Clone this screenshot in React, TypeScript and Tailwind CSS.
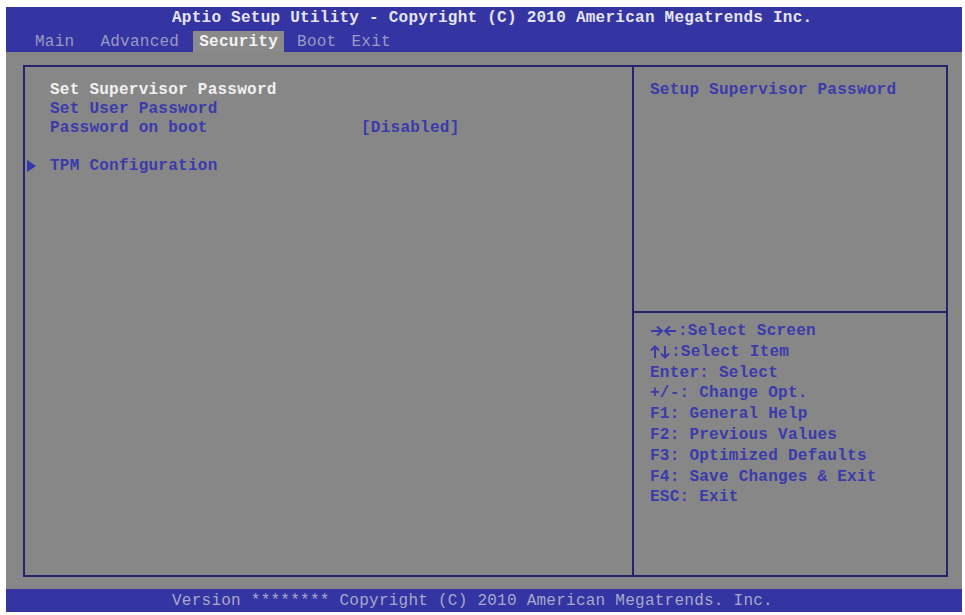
import React from "react";

const font = { fontFamily: '"Liberation Mono", "DejaVu Sans Mono", monospace' };

const tabs = [
  { label: "Main", active: false, gap: "mr-[14px]" },
  { label: "Advanced", active: false, gap: "mr-[8px]" },
  { label: "Security", active: true, gap: "mr-[7px]" },
  { label: "Boot", active: false, gap: "mr-[3px]" },
  { label: "Exit", active: false, gap: "" },
];

const helpKeys = [
  "Enter: Select",
  "+/-: Change Opt.",
  "F1: General Help",
  "F2: Previous Values",
  "F3: Optimized Defaults",
  "F4: Save Changes & Exit",
  "ESC: Exit",
];

function LeftRightArrows() {
  return (
    <svg width="27" height="12" viewBox="0 0 27 12" className="inline-block mr-[1px]">
      <g stroke="#3b3bab" strokeWidth="2" fill="none">
        <path d="M1 6h11M7 1.5l5 4.5-5 4.5" />
        <path d="M26 6h-11M20 1.5l-5 4.5 5 4.5" />
      </g>
    </svg>
  );
}

function UpDownArrows() {
  return (
    <svg width="20" height="14" viewBox="0 0 20 14" className="inline-block mr-[1px]">
      <g stroke="#3b3bab" strokeWidth="2" fill="none">
        <path d="M5 13V1.5M1 5.5l4-4 4 4" />
        <path d="M15 1v11.5M11 8.5l4 4 4-4" />
      </g>
    </svg>
  );
}

export default function App() {
  return (
    <div
      className="w-[965px] h-[615px] bg-white pt-[7px] pl-[6px] pr-[3px] pb-[3px] flex flex-col text-[16px] tracking-[0.25px] font-bold"
      style={font}
    >
      {/* Header */}
      <div className="h-[45px] bg-[#3434a2] flex flex-col">
        <div className="h-[21px] pl-[166px] flex items-center text-[#e4e4f0] whitespace-pre">
          Aptio Setup Utility - Copyright (C) 2010 American Megatrends Inc.
        </div>
        <div className="flex-1 flex items-end pl-[23px]">
          {tabs.map((t) => (
            <div
              key={t.label}
              className={`h-[21px] px-[6px] flex items-center ${t.gap} ${
                t.active ? "bg-[#8a8a8a] text-[#f2f2f2]" : "text-[#9a9ac2] font-normal"
              }`}
            >
              {t.label}
            </div>
          ))}
        </div>
      </div>

      {/* Body */}
      <div className="flex-1 bg-[#878787] pl-[17px] pt-[13px] pr-[14px] pb-[12px]">
        <div className="h-full border-2 border-[#24246a] flex">
          {/* Left pane */}
          <div className="w-[609px] border-r-2 border-[#24246a] pt-[14px] pl-[25px] leading-[19px]">
            <div className="text-[#f0f0f0]">Set Supervisor Password</div>
            <div className="text-[#3b3bab]">Set User Password</div>
            <div className="flex text-[#3b3bab]">
              <span className="w-[311px]">Password on boot</span>
              <span>[Disabled]</span>
            </div>
            <div className="h-[19px]" />
            <div className="relative text-[#3b3bab]">
              <svg width="9" height="12" viewBox="0 0 9 12" className="absolute left-[-23px] top-[3px]">
                <path d="M0 0L9 6L0 12Z" fill="#3535b0" />
              </svg>
              TPM Configuration
            </div>
          </div>

          {/* Right pane */}
          <div className="flex-1 flex flex-col">
            <div className="h-[246px] border-b-2 border-[#24246a] pl-[16px] pt-[14px] leading-[19px] text-[#3b3bab]">
              Setup Supervisor Password
            </div>
            <div className="flex-1 pl-[16px] pt-[8px] leading-[20.8px] text-[#3b3bab]">
              <div className="flex items-center h-[20.8px] whitespace-pre">
                <LeftRightArrows />
                <span>:Select Screen</span>
              </div>
              <div className="flex items-center h-[20.8px] whitespace-pre">
                <UpDownArrows />
                <span>:Select Item</span>
              </div>
              {helpKeys.map((h) => (
                <div key={h} className="whitespace-pre">
                  {h}
                </div>
              ))}
            </div>
          </div>
        </div>
      </div>

      {/* Footer */}
      <div className="h-[23px] bg-[#3434a2] pl-[166px] flex items-center text-[#a8a8cc] font-normal whitespace-pre">
        Version ******** Copyright (C) 2010 American Megatrends. Inc.
      </div>
    </div>
  );
}
